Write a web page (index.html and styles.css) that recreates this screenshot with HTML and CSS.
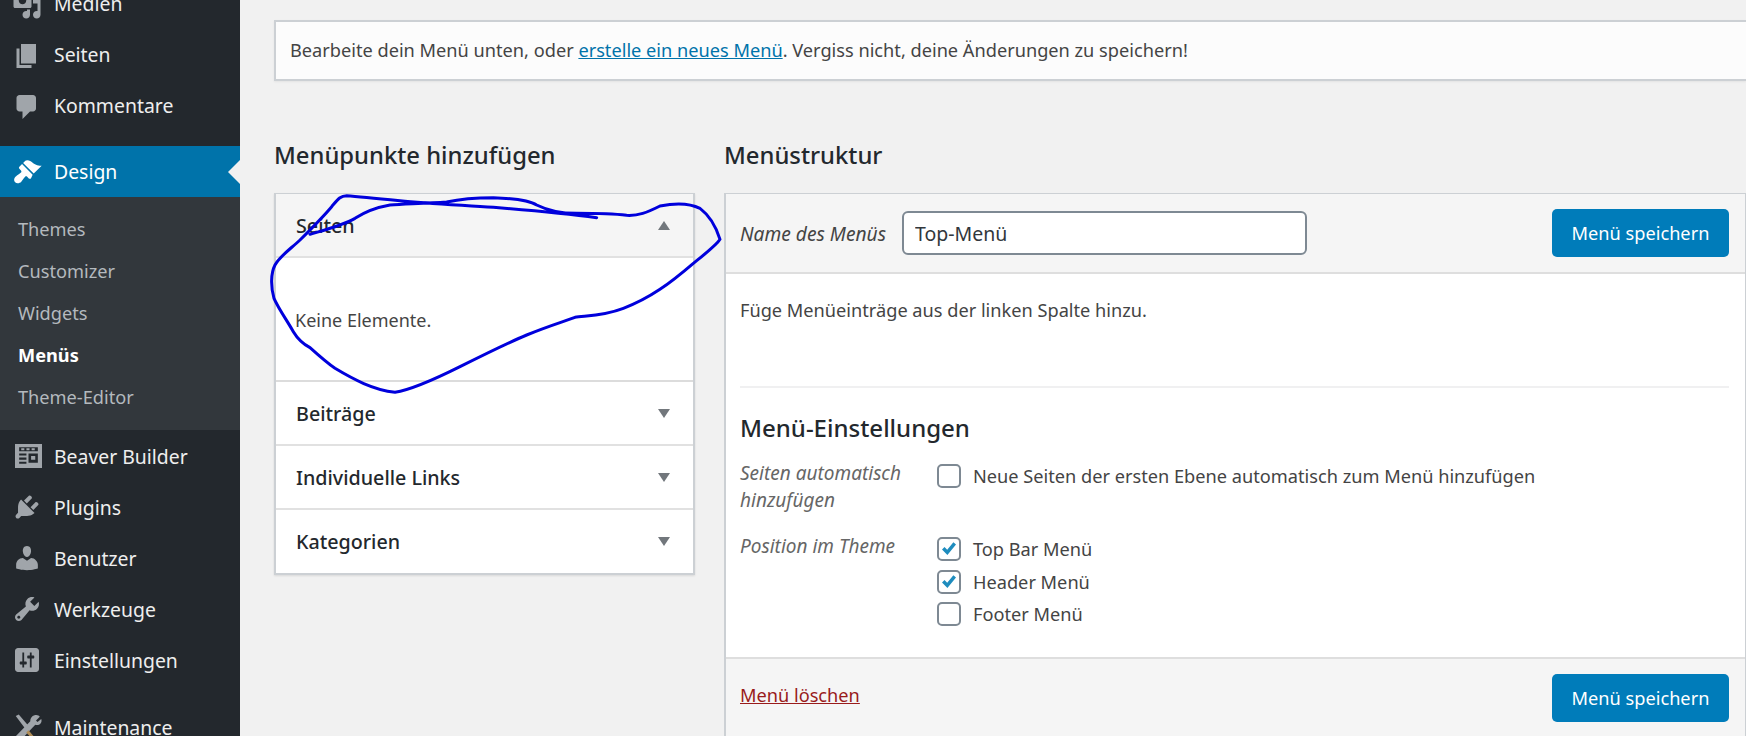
FILE: index.html
```html
<!DOCTYPE html>
<html lang="de">
<head>
<meta charset="utf-8">
<title>Menüs</title>
<link rel="stylesheet" href="styles.css">
</head>
<body>
<div class="app">
  <nav class="sidebar">
    <ul class="menu menu-top">
      <li class="item"><svg class="ico" viewBox="0 0 20 20"><path d="M13 11V4c0-.55-.45-1-1-1h-1.670L9 1H5L3.670 3H2c-.55 0-1 .45-1 1v7c0 .55.45 1 1 1h10c.55 0 1-.45 1-1zM7 4.500c1.380 0 2.500 1.120 2.500 2.500S8.380 9.500 7 9.500 4.500 8.380 4.500 7 5.620 4.500 7 4.500zM14 6h5v10.500c0 1.380-1.120 2.500-2.500 2.500S14 17.880 14 16.500s1.120-2.500 2.500-2.500c.17 0 .34.020.5.050V9h-3V6zm-4 8.050V13h2v3.500c0 1.380-1.120 2.500-2.500 2.500S7 17.880 7 16.500 8.120 14 9.500 14c.17 0 .34.020.5.050z"/></svg><span>Medien</span></li>
      <li class="item"><svg class="ico" viewBox="0 0 20 20"><path d="M6 15V2h10v13H6zm-1 1h8v2H3V5h2v11z"/></svg><span>Seiten</span></li>
      <li class="item"><svg class="ico" viewBox="0 0 20 20"><path d="M5 2h9c1.100 0 2 .9 2 2v7c0 1.100-.9 2-2 2h-2l-5 5v-5H5c-1.100 0-2-.9-2-2V4c0-1.100.9-2 2-2z"/></svg><span>Kommentare</span></li>
    </ul>
    <ul class="menu menu-active">
      <li class="item item-current"><svg class="ico" viewBox="0 0 20 20"><path d="M14.480 11.060L7.410 3.990l1.500-1.500c.5-.56 2.300-.47 3.510.32 1.210.8 1.430 1.280 2.910 2.100 1.180.64 2.450 1.260 4.450.85zm-.71.71L6.700 4.700 4.930 6.470c-.39.39-.39 1.020 0 1.410l1.060 1.060c.39.39.39 1.030 0 1.420-.6.6-1.430 1.110-2.210 1.690-.35.26-.7.53-1.010.84C1.430 13.710.96 15.650 2.100 16.790c1.130 1.130 3.080.66 4.100-.37.31-.31.58-.66.84-1.010.58-.78 1.090-1.610 1.690-2.210.39-.39 1.030-.39 1.420 0l1.060 1.060c.39.39 1.020.39 1.410 0z"/></svg><span>Design</span></li>
      <li>
        <ul class="submenu">
          <li>Themes</li>
          <li>Customizer</li>
          <li>Widgets</li>
          <li class="sub-current">Menüs</li>
          <li>Theme-Editor</li>
        </ul>
      </li>
    </ul>
    <ul class="menu menu-tools">
      <li class="item"><svg class="ico ico-wide" viewBox="0 0 26 23"><path fill-rule="evenodd" d="M0 0h26v23H0zM4 3v4h18V3zM4 9v2h7V9zm9 0v9h9V9zM4 13v2h7v-2zm0 4v2h7v-2z"/><path d="M6 4h3v2H6zm5 0h3v2h-3zm5 0h3v2h-3zM15.500 11.500h4v3.500h-4z"/></svg><span>Beaver Builder</span></li>
      <li class="item"><svg class="ico" viewBox="0 0 20 20"><path d="M13.110 4.360L9.870 7.600 8 5.730l3.240-3.240c.35-.34 1.050-.2 1.560.32.52.51.66 1.210.31 1.550zm-8 1.770l.91-1.120 9.010 9.010-1.190.84c-.71.71-2.630 1.160-3.820 1.160H6.140L4.900 17.260c-.59.59-1.540.59-2.120 0-.59-.58-.59-1.530 0-2.120l1.240-1.240v-3.880c0-1.130.4-3.050 1.090-3.890zm7.260 3.970l3.240-3.240c.34-.35 1.040-.21 1.550.31.52.51.66 1.210.31 1.560l-3.240 3.250z"/></svg><span>Plugins</span></li>
      <li class="item"><svg class="ico" viewBox="0 0 20 20"><path d="M10 9.250c-2.270 0-2.730-3.440-2.730-3.440C7 4.020 7.820 2 9.970 2c2.160 0 2.980 2.020 2.710 3.810 0 0-.41 3.440-2.680 3.440zm0 2.570L12.720 10c2.390 0 4.520 2.330 4.520 4.530v2.490s-3.650 1.130-7.240 1.130c-3.650 0-7.240-1.130-7.240-1.130v-2.490c0-2.250 1.940-4.480 4.470-4.480z"/></svg><span>Benutzer</span></li>
      <li class="item"><svg class="ico" viewBox="0 0 20 20"><path d="M16.680 9.770c-1.340 1.340-3.300 1.670-4.950.99l-5.410 6.520c-.99.99-2.590.99-3.580 0s-.99-2.590 0-3.570l6.520-5.420c-.68-1.650-.35-3.610.99-4.950 1.280-1.280 3.120-1.620 4.720-1.060l-2.890 2.890 2.820 2.820 2.860-2.870c.53 1.580.18 3.390-1.080 4.650zM3.810 16.210c.4.390 1.040.39 1.430 0 .4-.4.4-1.040 0-1.430-.39-.4-1.030-.4-1.430 0-.39.39-.39 1.030 0 1.430z"/></svg><span>Werkzeuge</span></li>
      <li class="item"><svg class="ico" viewBox="0 0 20 20"><path fill-rule="evenodd" d="M4 2h12c1.100 0 2 .9 2 2v12c0 1.100-.9 2-2 2H4c-1.100 0-2-.9-2-2V4c0-1.100.9-2 2-2zM6.900 5v6H5.500c-.5 0-.5 2 0 2h1.400v2h1.200v-2h1.400c.5 0 .5-2 0-2H8.100V5zM11.900 5v2h-1.400c-.5 0-.5 2 0 2h1.400v6h1.200V9h1.400c.5 0 .5-2 0-2h-1.400V5z"/></svg><span>Einstellungen</span></li>
    </ul>
    <ul class="menu">
      <li class="item"><svg class="ico" viewBox="0 0 20 20"><path d="M2.500 2l2-1 6 7-2 2zM15 1.500c1.500-.5 3 0 3.500 1L16 5l1 1 2.500-2c.5 1.500 0 3-1.500 3.800-1 .4-2 .3-2.500 0L5 19H3l-1-1v-2L12.200 5.500c-.2-1.500.8-3.500 2.800-4z"/><path class="ico-tan" d="M11 11.500l6 7-1.500 1-6-6.500z"/></svg><span>Maintenance</span></li>
    </ul>
  </nav>

  <main class="content">
    <div class="notice">Bearbeite dein Menü unten, oder <a href="#">erstelle ein neues Menü</a>. Vergiss nicht, deine Änderungen zu speichern!</div>

    <div class="columns">
      <section class="col-left">
        <h2 class="col-title">Menüpunkte hinzufügen</h2>
        <div class="accordion">
          <div class="acc-head acc-open">Seiten<i class="tri tri-up"></i></div>
          <div class="acc-body">Keine Elemente.</div>
          <div class="acc-head">Beiträge<i class="tri"></i></div>
          <div class="acc-head">Individuelle Links<i class="tri"></i></div>
          <div class="acc-head">Kategorien<i class="tri"></i></div>
        </div>
      </section>

      <section class="col-right">
        <h2 class="col-title">Menüstruktur</h2>
        <div class="panel">
          <div class="panel-head">
            <label class="name-label">Name des Menüs</label>
            <input class="name-input" type="text" value="Top-Menü">
            <button class="btn">Menü speichern</button>
          </div>
          <div class="panel-body">
            <p class="hint">Füge Menüeinträge aus der linken Spalte hinzu.</p>
            <hr class="divider">
            <h3 class="settings-title">Menü-Einstellungen</h3>
            <div class="setting setting-auto">
              <div class="setting-label">Seiten automatisch hinzufügen</div>
              <div class="setting-opts">
                <div class="opt"><span class="box"></span>Neue Seiten der ersten Ebene automatisch zum Menü hinzufügen</div>
              </div>
            </div>
            <div class="setting">
              <div class="setting-label">Position im Theme</div>
              <div class="setting-opts">
                <div class="opt"><span class="box"><svg viewBox="0 0 20 20"><path d="M3 10.500l2.500-2.500 2.700 2.800 6.200-7.600 2.600 2.200-8.600 10.600z"/></svg></span>Top Bar Menü</div>
                <div class="opt"><span class="box"><svg viewBox="0 0 20 20"><path d="M3 10.500l2.500-2.500 2.700 2.800 6.200-7.600 2.600 2.200-8.600 10.600z"/></svg></span>Header Menü</div>
                <div class="opt"><span class="box"></span>Footer Menü</div>
              </div>
            </div>
          </div>
          <div class="panel-foot">
            <a class="delete" href="#">Menü löschen</a>
            <button class="btn">Menü speichern</button>
          </div>
        </div>
      </section>
    </div>
  </main>

  <svg class="scribble" viewBox="0 0 1410 720"><path d="M1010 113C900 98 800 90 700 82 600 75 500 70 420 62 350 55 300 50 260 47 240 47 232 60 215 80 190 110 150 150 120 180 90 208 60 228 45 255 32 280 32 320 42 355 55 385 80 420 100 455 115 480 130 492 150 503 180 530 200 548 225 565 280 598 340 630 405 637 450 630 530 595 600 560 680 520 740 490 800 465 860 440 910 425 945 412 980 407 1030 408 1090 385 1170 355 1230 310 1300 250 1340 218 1370 195 1380 178 1365 130 1340 100 1320 85 1290 70 1250 68 1200 78 1160 98 1135 108 1100 106 1050 100 1000 100 950 100 900 100 860 90 830 75 810 62 760 55 700 53 640 53 600 57 560 66 500 70 440 72 390 75 350 82 320 92 285 115 250 135 200 148 150 163 130 175 120 180"/></svg>
</div>
</body>
</html>
```

FILE: styles.css
```css
* { box-sizing: border-box; }
html, body { margin: 0; padding: 0; height: 100%; }
body {
  background: #f1f1f1;
  color: #444;
  font-family: "Noto Sans", "Open Sans", sans-serif;
  font-size: 18.2px;
  overflow: hidden;
}
.app {
  position: relative;
  display: flex;
  align-items: flex-start;
  width: 1746px;
  height: 736px;
  overflow: hidden;
}

/* Sidebar */
.sidebar {
  flex: 0 0 240px;
  background: #23282d;
  margin-top: -21px;
  height: 780px;
}
.menu { list-style: none; margin: 0 0 17px; padding: 0; }
.menu-top { margin-bottom: 14px; }
.menu-top .item span { padding-bottom: 2px; }
.menu-active { margin-bottom: 0; }
.menu-tools .item span { padding-top: 2px; }
.item {
  display: flex;
  align-items: center;
  height: 51px;
  color: #eee;
  font-size: 19.4px;
  line-height: 1;
}
.item span { margin-left: 12px; }
.ico { flex: 0 0 30px; width: 30px; height: 30px; margin-left: 12px; fill: #a0a5aa; }
.ico-wide { height: 24px; flex-basis: 27px; width: 27px; margin-left: 15px; }
.ico-tan { fill: #b08d57; }
.item-current {
  position: relative;
  background: #0073aa;
  color: #fff;
}
.item-current .ico { fill: #fff; }
.item-current::after {
  content: "";
  position: absolute;
  right: 0;
  top: 50%;
  margin-top: -12px;
  border: 12px solid transparent;
  border-left-width: 0;
  border-right-color: #f1f1f1;
}
.submenu {
  list-style: none;
  margin: 0;
  padding: 11px 0 12px;
  background: #32373c;
  color: #b4b9be;
  font-size: 18.2px;
}
.submenu li {
  height: 42px;
  line-height: 42px;
  padding-left: 18px;
}
.submenu .sub-current { color: #fff; font-weight: 700; }

/* Content */
.content { flex: 1; padding: 20px 0 0 34px; min-width: 0; }
.notice {
  height: 61px;
  line-height: 56px;
  padding-left: 14px;
  background: #fcfcfc;
  border: 2px solid #ccd0d4;
  border-right: 0;
  box-shadow: 0 1px 2px rgba(0,0,0,.06);
  white-space: nowrap;
}
.notice a { color: #0073aa; }
.columns { display: flex; gap: 29px; align-items: flex-start; margin-top: 54px; }
.col-left { flex: 0 0 421px; }
.col-right { flex: 1; min-width: 0; }
.col-title {
  margin: 0 0 20px;
  color: #23282d;
  font-size: 23.8px;
  font-weight: 500;
  line-height: 40px;
  height: 38px;
}

/* Accordion */
.accordion {
  background: #fff;
  border: 2px solid #ccd0d4;
  border-top-width: 1px;
  box-shadow: 0 1px 2px rgba(0,0,0,.1);
}
.acc-head {
  display: flex;
  justify-content: space-between;
  align-items: center;
  height: 64px;
  padding: 0 23px 0 20px;
  color: #23282d;
  font-size: 19.7px;
  font-weight: 500;
  border-bottom: 2px solid #e1e1e1;
}
.acc-head:last-child { height: 63px; border-bottom: 0; }
.acc-open { background: #f5f5f5; }
.acc-body {
  height: 124px;
  padding: 0 19px;
  line-height: 124px;
  border-bottom: 2px solid #dcdcdc;
  font-size: 18px;
}
.tri {
  display: block;
  width: 0;
  height: 0;
  border-left: 6.5px solid transparent;
  border-right: 6.5px solid transparent;
  border-top: 9px solid #72777c;
}
.tri-up { border-top: 0; border-bottom: 9px solid #72777c; }

/* Panel */
.panel {
  background: #fff;
  border: 2px solid #ccd0d4;
  border-top-width: 1px;
  border-right-width: 1px;
}
.panel-head {
  display: flex;
  align-items: center;
  height: 80px;
  padding: 0 16px 0 14px;
  background: #f5f5f5;
  border-bottom: 2px solid #dedede;
}
.name-label { font-style: italic; font-size: 19.2px; color: #444; }
.name-input {
  width: 405px;
  height: 44px;
  margin-left: 16px;
  padding: 0 11px;
  border: 2px solid #7e8993;
  border-radius: 6px;
  background: #fff;
  color: #32373c;
  font: 19.5px "Noto Sans", "Open Sans", sans-serif;
}
.btn {
  width: 177px;
  height: 48px;
  margin-left: auto;
  border: 0;
  border-radius: 5px;
  background: #007cba;
  color: #fff;
  font: 18.2px "Noto Sans", "Open Sans", sans-serif;
}
.panel-body { padding: 22px 16px 0 14px; height: 383px; }
.hint { margin: 0; line-height: 28px; }
.divider { height: 2px; margin: 62px 0 0; border: 0; background: #f0f0f1; }
.settings-title {
  margin: 24px 0 0;
  color: #23282d;
  font-size: 24px;
  font-weight: 500;
  line-height: 32px;
}
.setting { display: flex; }
.setting-auto { margin-top: 16px; height: 73px; }
.setting-label {
  flex: 0 0 197px;
  padding-right: 20px;
  font-style: italic;
  font-size: 19px;
  line-height: 27px;
  color: #666;
}
.opt { display: flex; align-items: center; height: 32.5px; white-space: nowrap; }
.box {
  display: flex;
  flex: 0 0 24px;
  width: 24px;
  height: 24px;
  margin-right: 12px;
  align-items: center;
  justify-content: center;
  background: #fff;
  border: 2px solid #7e8993;
  border-radius: 5px;
}
.box svg { width: 20px; height: 20px; fill: #1e8cbe; }
.panel-foot {
  display: flex;
  align-items: center;
  justify-content: space-between;
  height: 80px;
  padding: 0 16px 0 14px;
  background: #f5f5f5;
  border-top: 2px solid #dedede;
}
.delete { margin-bottom: 7px; color: #991b1b; }

/* Hand-drawn marker over the screenshot */
.scribble {
  position: absolute;
  left: 260px;
  top: 180px;
  width: 470px;
  height: 240px;
  overflow: visible;
  pointer-events: none;
}
.scribble path { fill: none; stroke: #0000dc; stroke-width: 9; stroke-linejoin: round; stroke-linecap: round; }
```
